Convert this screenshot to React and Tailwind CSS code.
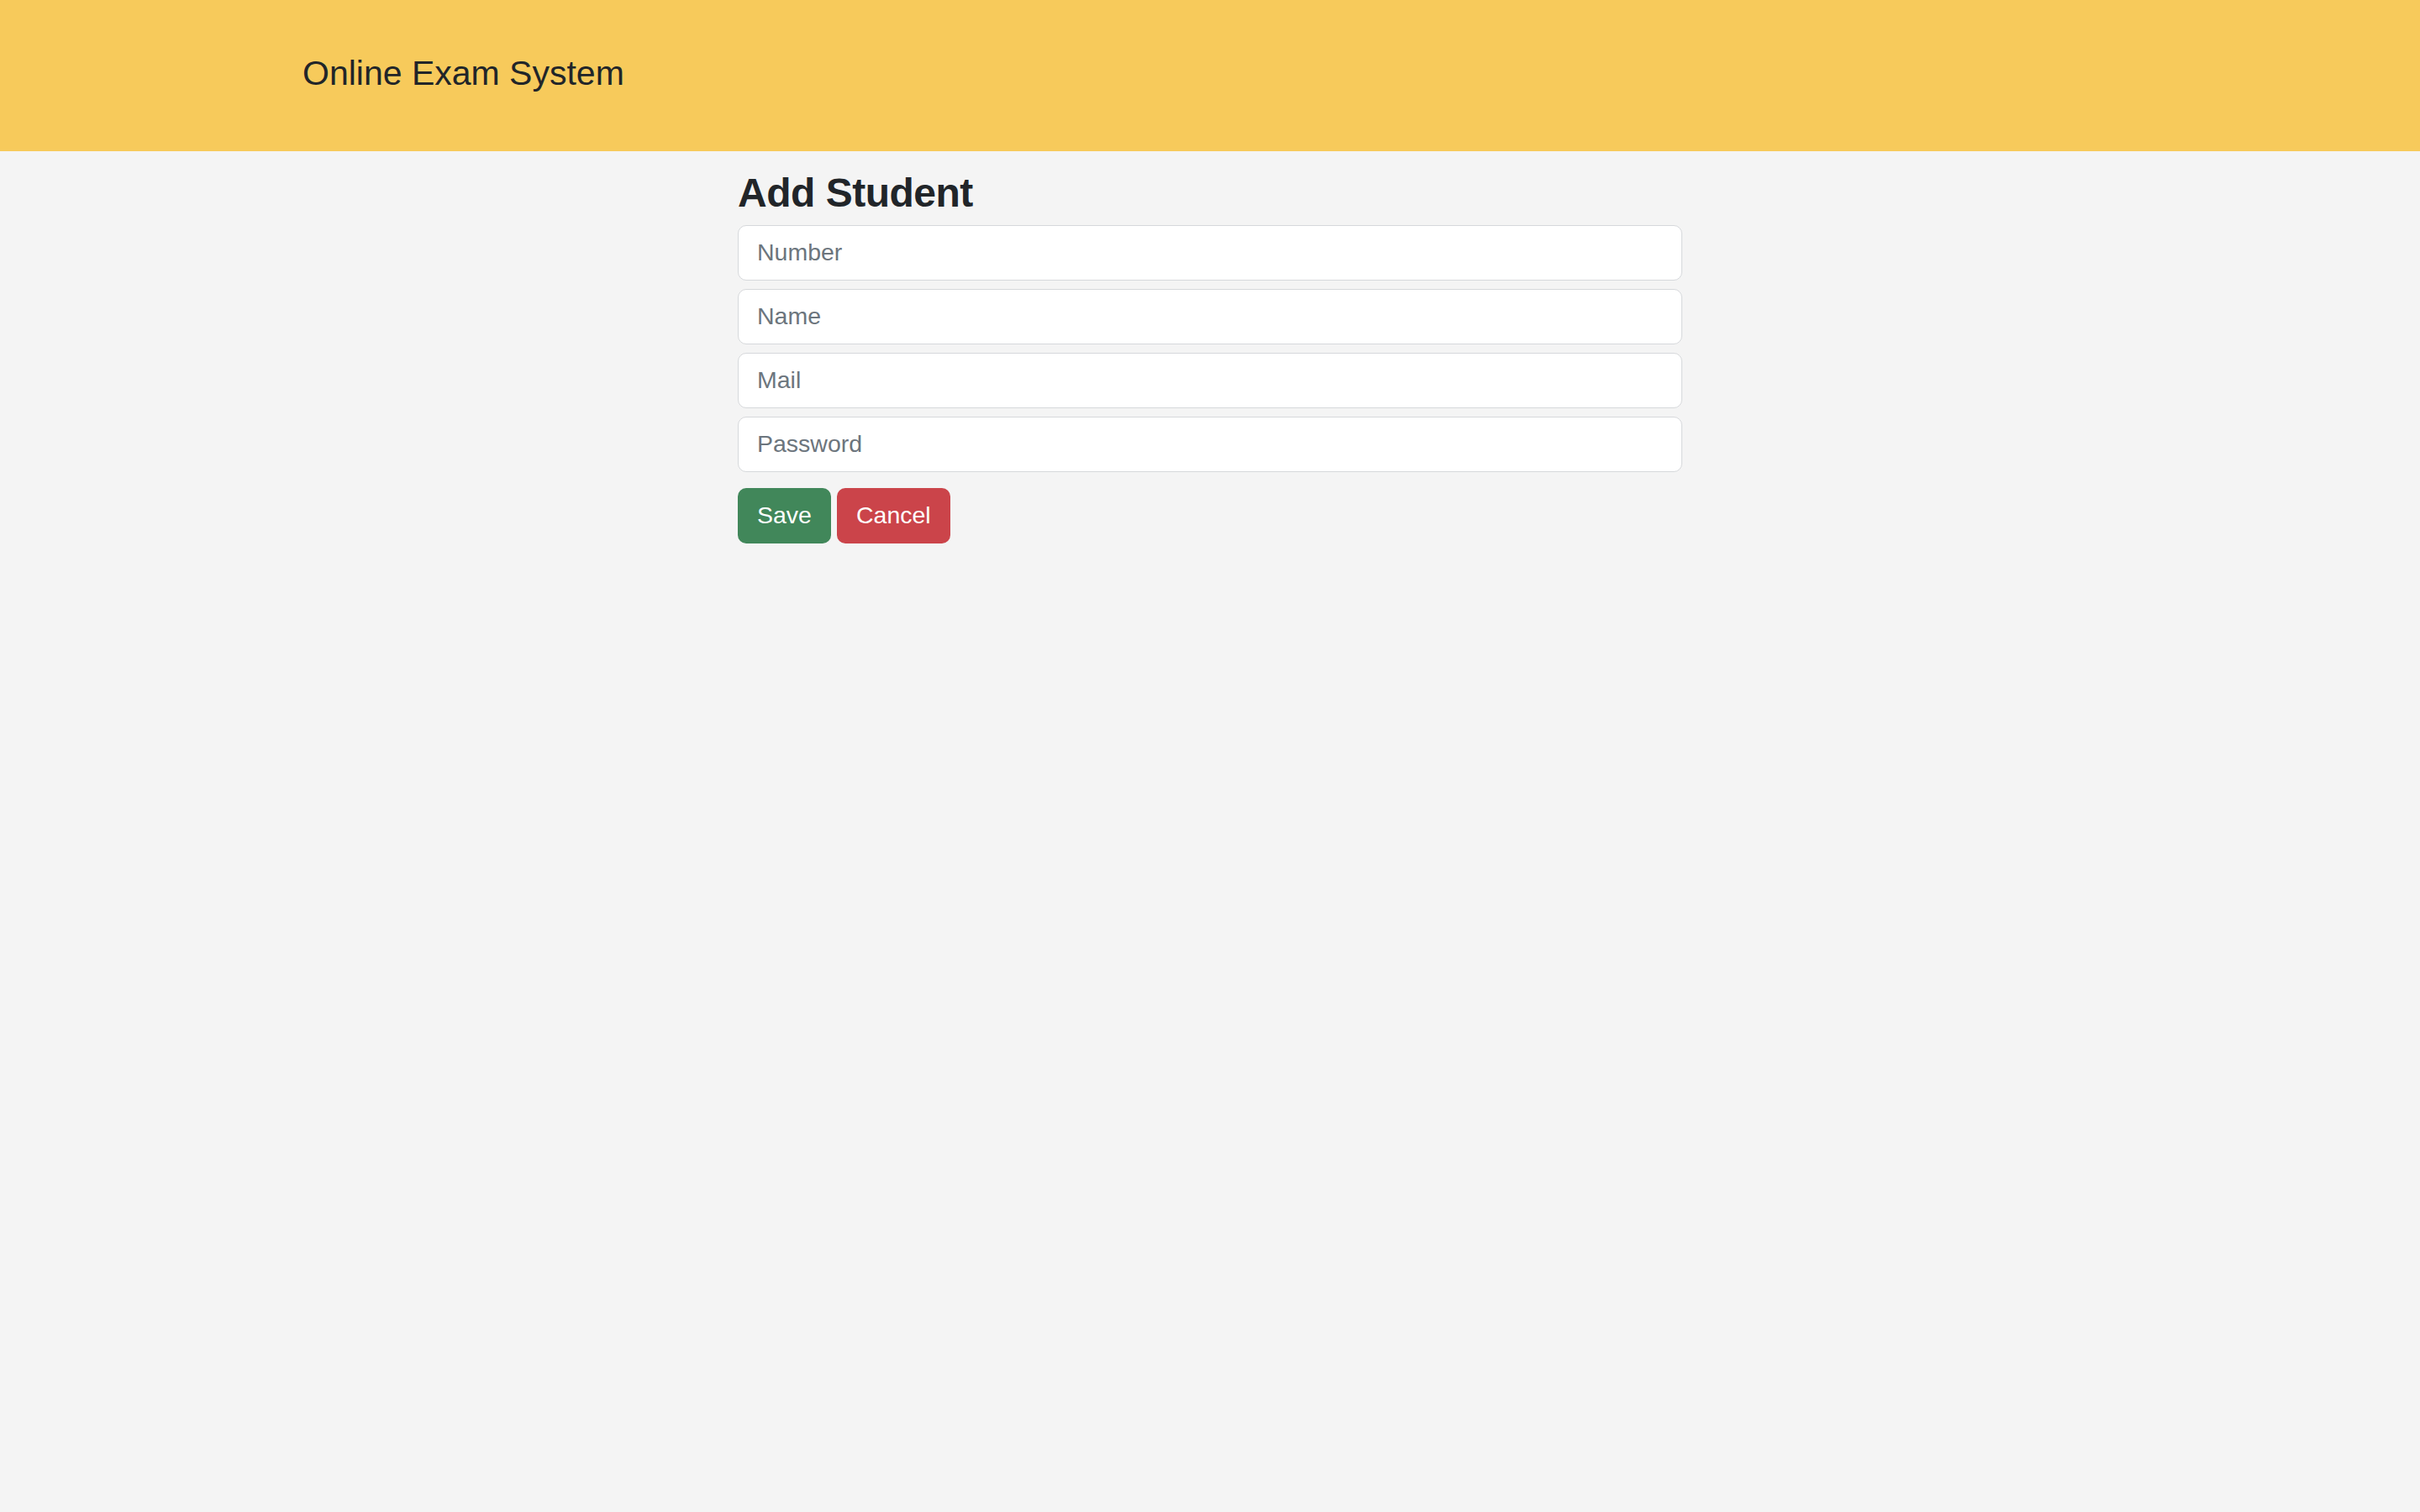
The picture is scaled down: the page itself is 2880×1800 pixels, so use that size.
export default function App() {
  const fields = ["Number", "Name", "Mail", "Password"];
  return (
    <div className="min-h-[1800px] bg-[#f4f4f4] font-['Liberation_Sans',Arial,sans-serif] text-[#212529]">
      <header className="h-[180px] bg-[#f7ca5b] flex items-center pl-[360px] pb-[5px]">
        <span className="text-[41px] leading-[63px] text-[#212529]">Online Exam System</span>
      </header>
      <main className="w-[1124px] mx-auto">
        <h3 className="mt-[20px] mb-[8.5px] text-[48px] leading-[59px] font-bold tracking-[-0.5px] text-[#212529]">
          Add Student
        </h3>
        <div className="flex flex-col gap-[10px]">
          {fields.map((f) => (
            <input
              key={f}
              placeholder={f}
              className="h-[66px] w-full rounded-[10px] border border-[#d6d8db] bg-white px-[22px] text-[28.5px] text-[#212529] placeholder:text-[#6c757d] outline-none"
            />
          ))}
        </div>
        <div className="mt-[19px] flex gap-[7px]">
          <button className="h-[66px] rounded-[10px] bg-[#41875a] px-[23px] text-[28.5px] text-white">
            Save
          </button>
          <button className="h-[66px] rounded-[10px] bg-[#cb444a] px-[23px] text-[28.5px] text-white">
            Cancel
          </button>
        </div>
      </main>
    </div>
  );
}
